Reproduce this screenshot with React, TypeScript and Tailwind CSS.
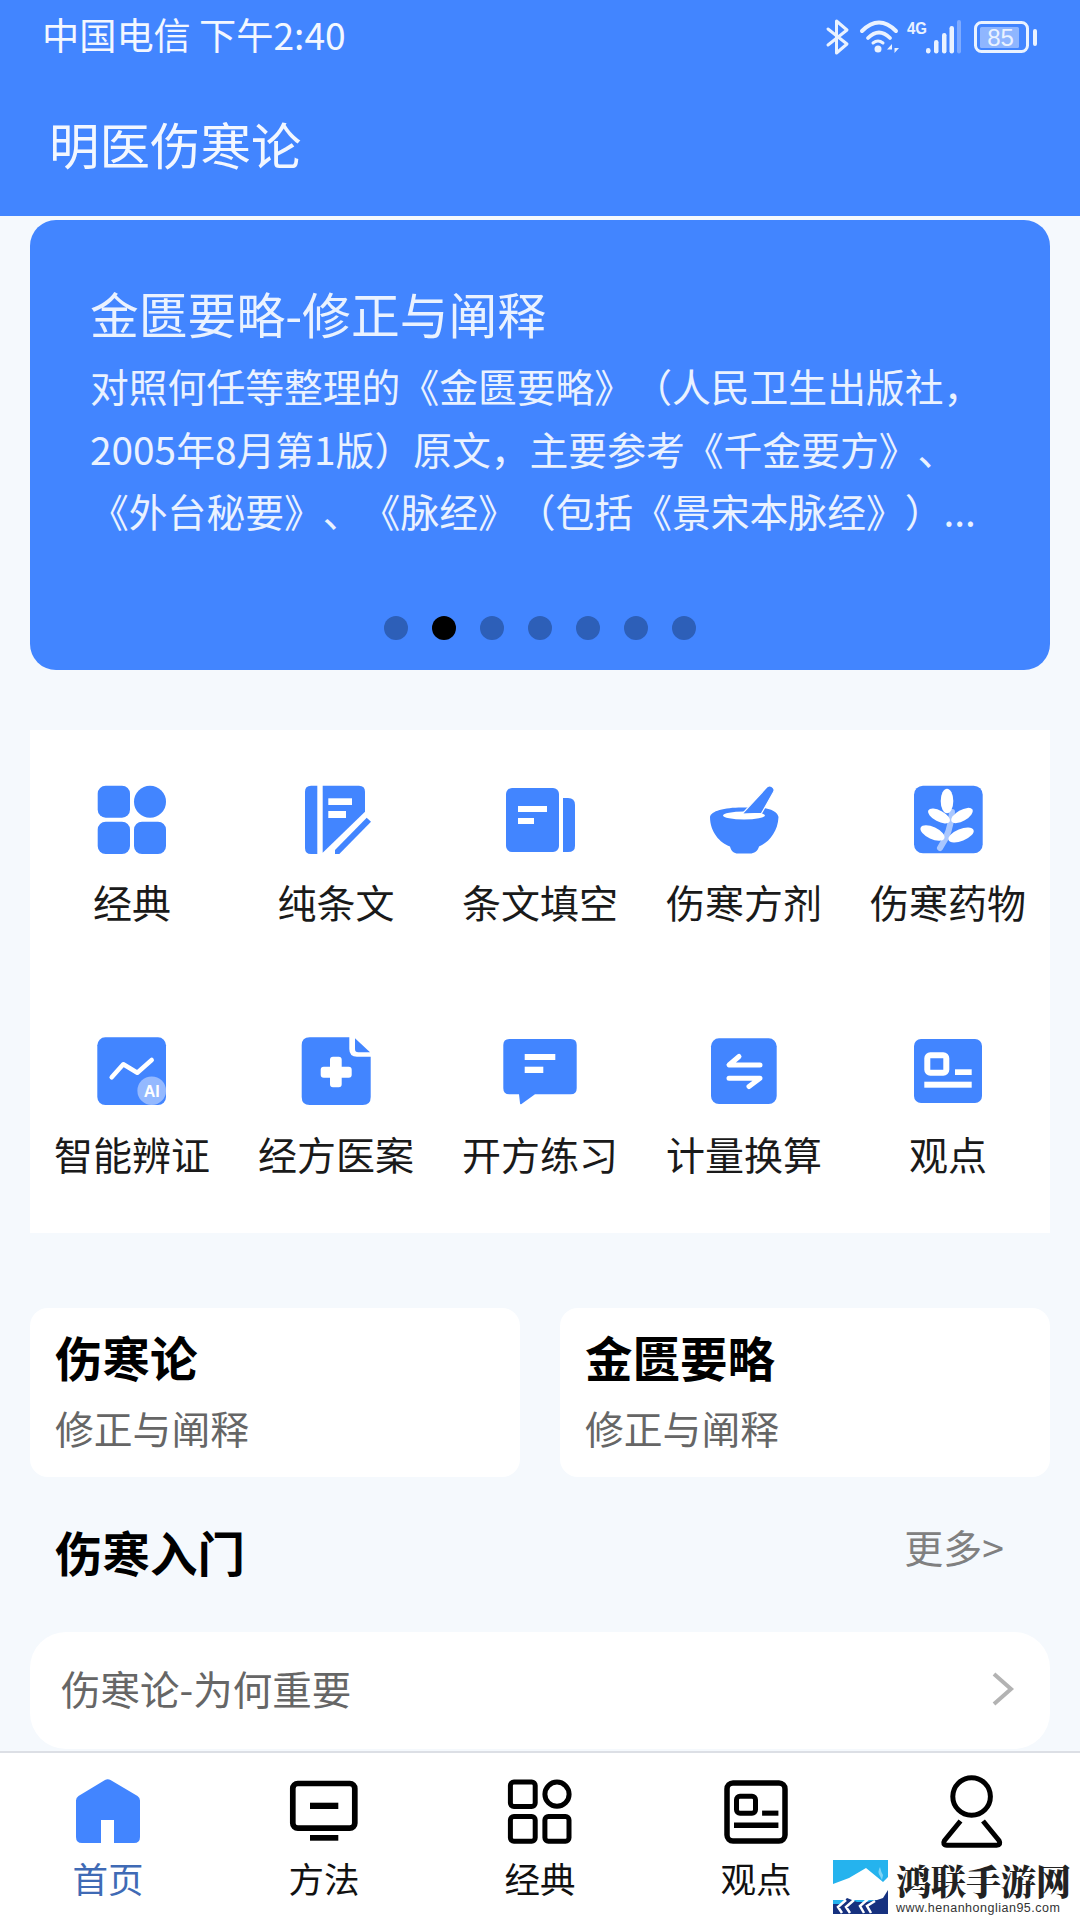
const B = "#4285ff";

function StatusIcons() {
  return (
    <svg width="220" height="44" viewBox="820 14 220 44" fill="none">
      <path d="M828 28 L847 43 L836.500 52 V20 L847 29 L828 44" stroke="#eaf2ff" strokeWidth="3" strokeLinejoin="round" strokeLinecap="round" />
      <path d="M862 30 Q879 13 896 30" stroke="#eaf2ff" strokeWidth="4" strokeLinecap="round" />
      <path d="M868 37 Q879 26 890 37" stroke="#eaf2ff" strokeWidth="3.800" strokeLinecap="round" />
      <path d="M873 42 Q878 38 883 42" stroke="#eaf2ff" strokeWidth="3" strokeLinecap="round" />
      <circle cx="878" cy="48" r="3.500" fill="#eaf2ff" />
      <path d="M892 43 L887 48.500 H892 Z M894.500 43 V52 L899 47 H894.500 Z" fill="#eaf2ff" />
      <text x="907" y="33" fontSize="16" fontWeight="700" fill="#eaf2ff" textLength="20" lengthAdjust="spacingAndGlyphs" fontFamily="'Liberation Sans',sans-serif">4G</text>
      <rect x="926" y="47" width="4.500" height="5.500" rx="2.200" fill="#eaf2ff" />
      <rect x="934" y="39" width="4.500" height="13.500" rx="2.200" fill="#eaf2ff" />
      <rect x="942" y="32" width="4.500" height="20.500" rx="2.200" fill="#eaf2ff" />
      <rect x="949.500" y="25" width="4.500" height="27.500" rx="2.200" fill="#eaf2ff" />
      <rect x="957" y="19" width="4" height="33.500" rx="2" fill="#7fabff" />
      <rect x="975.500" y="21.500" width="52" height="29" rx="6" stroke="#eaf2ff" strokeWidth="3" />
      <rect x="980" y="26" width="39" height="21" rx="1.500" fill="#8fb6ff" />
      <text x="1000.500" y="45" fontSize="24" textAnchor="middle" fill="#eaf2ff" fontFamily="'Liberation Sans',sans-serif">85</text>
      <rect x="1033" y="28" width="4" height="17" rx="2" fill="#eaf2ff" />
    </svg>
  );
}

function Jingdian() {
  return (
    <svg width="72" height="72" viewBox="0 0 72 72">
      <rect x="1.700" y="1.700" width="32.300" height="32" rx="8" fill={B} />
      <circle cx="54" cy="17.700" r="16" fill={B} />
      <rect x="1.700" y="37.700" width="32.300" height="32.300" rx="8" fill={B} />
      <rect x="38" y="37.700" width="32" height="32.300" rx="8" fill={B} />
    </svg>
  );
}
function Chuntiao() {
  return (
    <svg width="72" height="72" viewBox="0 0 72 72">
      <path d="M11 1.700 H17.300 V70 H11 Q5 70 5 64 V7.700 Q5 1.700 11 1.700 Z" fill={B} />
      <path d="M22.700 1.700 H59 Q65 1.700 65 7.700 V27.700 L22.700 68.700 Z" fill={B} />
      <rect x="28.300" y="14.300" width="23.700" height="6.700" fill="#fff" />
      <rect x="28.300" y="27" width="17.700" height="7" fill="#fff" />
      <path d="M66.700 33.700 L71 37.700 L39.300 70 H35 V66 Z" fill={B} />
    </svg>
  );
}
function Tiaowen() {
  return (
    <svg width="72" height="72" viewBox="0 0 72 72">
      <rect x="2" y="4" width="53" height="64" rx="6" fill={B} />
      <path d="M59 14 H64 Q71 14 71 21 V62 Q71 68 64 68 H59 Z" fill={B} />
      <rect x="14" y="22" width="29" height="6" fill="#fff" />
      <rect x="14" y="34" width="16" height="6" fill="#fff" />
    </svg>
  );
}
function Bowl() {
  return (
    <svg width="72" height="72" viewBox="0 0 72 72">
      <path d="M2 33 C3 27 16 23.500 34 23.500 L52 23.500 C62 24 70 28 70.500 33 C70 48 60 59 51 62.500 C50 67 46 69.500 42 69.500 H30 C26 69.500 23 67 22 62.500 C12 59 2 48 2 33 Z" fill={B} />
      <ellipse cx="36" cy="31.500" rx="21" ry="4" fill="#fff" />
      <path d="M59.300 2.700 Q62 0.800 65 3.500 Q67 5.500 65.500 8 L53.500 29.300 L34 30 Z" fill={B} stroke="#fff" strokeWidth="1.200" />
    </svg>
  );
}
function Herb() {
  return (
    <svg width="72" height="72" viewBox="0 0 72 72">
      <rect x="2" y="1.700" width="68.700" height="67.600" rx="9" fill={B} />
      <path d="M40 28 Q39 48 28 64" stroke="#a9c7ff" strokeWidth="6" fill="none" strokeLinecap="round" />
      <g fill="#fff">
        <ellipse cx="35" cy="17" rx="6.300" ry="12.200" />
        <ellipse cx="27" cy="32" rx="12" ry="5.500" transform="rotate(28 27 32)" />
        <ellipse cx="50" cy="31.500" rx="12" ry="5.500" transform="rotate(-30 50 31.500)" />
        <ellipse cx="20.500" cy="49" rx="13" ry="6" transform="rotate(25 20.500 49)" />
        <ellipse cx="49" cy="51" rx="13.500" ry="6" transform="rotate(-22 49 51)" />
      </g>
    </svg>
  );
}
function AiIcon() {
  return (
    <svg width="72" height="72" viewBox="0 0 72 72">
      <rect x="1.300" y="1.300" width="68.700" height="67.700" rx="8" fill={B} />
      <path d="M15.700 41.300 L27.300 28.300 L41.300 36.700 L55.700 24" stroke="#fff" strokeWidth="4.500" fill="none" strokeLinecap="round" strokeLinejoin="round" />
      <circle cx="55.700" cy="54.700" r="14.300" fill="#94b9ff" />
      <text x="55.700" y="60.500" fontSize="16" fontWeight="700" fill="#fff" textAnchor="middle" fontFamily="'Liberation Sans',sans-serif">AI</text>
    </svg>
  );
}
function Cross() {
  return (
    <svg width="72" height="72" viewBox="0 0 72 72">
      <path d="M9.700 1.300 H49.300 V13 Q49.300 20.700 57 20.700 H70.700 V61 Q70.700 69 62.700 69 H9.700 Q1.700 69 1.700 61 V9.300 Q1.700 1.300 9.700 1.300 Z" fill={B} />
      <path d="M55 2.300 L70 16.300 H58.300 Q55 16.300 55 13 Z" fill={B} />
      <path d="M33 20.700 H38.700 Q41.700 20.700 41.700 23.700 V30.700 H48.700 Q51.700 30.700 51.700 33.700 V38.700 Q51.700 41.700 48.700 41.700 H41.700 V48.300 Q41.700 51.300 38.700 51.300 H33 Q30 51.300 30 48.300 V41.700 H23.700 Q20.700 41.700 20.700 38.700 V33.700 Q20.700 30.700 23.700 30.700 H30 V23.700 Q30 20.700 33 20.700 Z" fill="#fff" />
    </svg>
  );
}
function Chat() {
  return (
    <svg width="76" height="72" viewBox="-2 0 76 72">
      <path d="M5.300 3 H66.700 Q72.700 3 72.700 9 V52.300 Q72.700 58.300 66.700 58.300 H31 L17.500 68 Q16 68.800 16 67 L15 58.300 H5.300 Q-0.700 58.300 -0.700 52.300 V9 Q-0.700 3 5.300 3 Z" fill={B} />
      <rect x="20.700" y="18" width="30.600" height="6" fill="#fff" />
      <rect x="20.700" y="30.700" width="18.600" height="6.300" fill="#fff" />
    </svg>
  );
}
function Swap() {
  return (
    <svg width="72" height="72" viewBox="0 0 72 72">
      <rect x="3" y="2.300" width="65.700" height="65.700" rx="8" fill={B} />
      <path d="M31 20.500 L21 29 H52" stroke="#fff" strokeWidth="5" fill="none" strokeLinecap="round" strokeLinejoin="round" />
      <path d="M21 42.300 H52 L41 50.500" stroke="#fff" strokeWidth="5" fill="none" strokeLinecap="round" strokeLinejoin="round" />
    </svg>
  );
}
function Opinion() {
  return (
    <svg width="72" height="72" viewBox="0 0 72 72">
      <rect x="2" y="3" width="68" height="64" rx="7" fill={B} />
      <rect x="15.300" y="19.300" width="19" height="17.500" rx="3" fill="none" stroke="#fff" strokeWidth="6" />
      <rect x="43" y="33.300" width="16.700" height="5.700" fill="#fff" />
      <rect x="12.300" y="45.700" width="47.400" height="6" fill="#fff" />
    </svg>
  );
}

const gridItems = [
  { label: "经典", icon: <Jingdian /> },
  { label: "纯条文", icon: <Chuntiao /> },
  { label: "条文填空", icon: <Tiaowen /> },
  { label: "伤寒方剂", icon: <Bowl /> },
  { label: "伤寒药物", icon: <Herb /> },
  { label: "智能辨证", icon: <AiIcon /> },
  { label: "经方医案", icon: <Cross /> },
  { label: "开方练习", icon: <Chat /> },
  { label: "计量换算", icon: <Swap /> },
  { label: "观点", icon: <Opinion /> },
];

function NavHome() {
  return (
    <svg width="72" height="72" viewBox="0 0 72 72">
      <path d="M33 4 Q35.700 2.300 38.500 4 L65.500 20 Q68 21.500 68 24.500 V61 Q68 67 62 67 H42 V44 H29 V67 H10 Q4 67 4 61 V24.500 Q4 21.500 6.500 20 Z" fill={B} />
    </svg>
  );
}
function NavMethod() {
  return (
    <svg width="72" height="72" viewBox="0 0 72 72">
      <rect x="4.800" y="7.500" width="62" height="44.700" rx="5" fill="none" stroke="#000" strokeWidth="5.700" />
      <rect x="22" y="26.700" width="28.300" height="6.300" fill="#000" />
      <rect x="22" y="59" width="28.300" height="5.700" fill="#000" />
    </svg>
  );
}
function NavClassic() {
  return (
    <svg width="72" height="72" viewBox="0 0 72 72" fill="none" stroke="#000" strokeWidth="5">
      <rect x="6.400" y="6" width="24.800" height="24.500" rx="3.500" />
      <circle cx="53" cy="18.200" r="12.100" />
      <rect x="6.400" y="40.500" width="24.800" height="24.800" rx="3.500" />
      <rect x="40.900" y="40.500" width="24.100" height="24.800" rx="3.500" />
    </svg>
  );
}
function NavOpinion() {
  return (
    <svg width="72" height="72" viewBox="0 0 72 72" fill="none">
      <rect x="7" y="7" width="58" height="58" rx="6" stroke="#000" strokeWidth="5.500" />
      <rect x="16.500" y="20.200" width="19" height="17" rx="3.500" stroke="#000" strokeWidth="5" />
      <rect x="42.100" y="34.600" width="16.300" height="5.100" fill="#000" />
      <rect x="14" y="46.500" width="44.400" height="5.500" fill="#000" />
    </svg>
  );
}
function NavMe() {
  return (
    <svg width="72" height="72" viewBox="0 0 72 72" fill="none" stroke="#000" strokeWidth="5" strokeLinejoin="round" className="overflow-visible">
      <circle cx="35.600" cy="20.500" r="18.800" />
      <path d="M24.500 45 L8.500 64.500 Q6 69 11 69.300 H60.500 Q65.500 69 63 64.500 L47 45" />
    </svg>
  );
}

const navItems = [
  { label: "首页", icon: <NavHome />, active: true },
  { label: "方法", icon: <NavMethod /> },
  { label: "经典", icon: <NavClassic /> },
  { label: "观点", icon: <NavOpinion /> },
  { label: "", icon: <NavMe /> },
];

function Logo() {
  return (
    <svg width="55" height="54" viewBox="0 0 55 54">
      <rect width="55" height="54" fill="#25b3ee" />
      <path d="M0 24 L16 18 L33 8 L44 17 L50 22 L55 17 V40 H0 Z" fill="#fff" />
      <path d="M47 16 Q44 12 47 7 Q48 12 50 15 L49 20 Z" fill="#7fd4f5" />
      <path d="M0 44 H8 L14 38 L24 42 L34 42 L44 40 L50 38 L55 30 V54 H0 Z" fill="#16317f" />
      <path d="M13 40 L5 47 L9 53 M21 40 L13 47 L17 53 M35 39 L27 46 L31 53 M42 41 L34 46 L38 53" stroke="#fff" strokeWidth="2.500" fill="none" />
    </svg>
  );
}

export default function App() {
  return (
    <div className="relative flex h-[1920px] w-[1080px] flex-col overflow-hidden bg-[#f5f9fd] font-['Noto_Sans_CJK_SC','Noto_Sans',sans-serif] [text-spacing-trim:space-all]">
      <header className="flex h-[216px] shrink-0 flex-col bg-[#4285ff] text-[#f3f7ff]">
        <div className="flex h-[74px] items-center justify-between pl-[42px] pr-[40px]">
          <span className="mb-[4px] text-[37.200px] leading-none">中国电信 下午2:40</span>
          <StatusIcons />
        </div>
        <div className="pl-[49px] pt-[32px] text-[50.500px] leading-[74px]">明医伤寒论</div>
      </header>

      <main className="flex flex-1 flex-col px-[30px] pt-[4px]">
        <section className="flex h-[450px] shrink-0 flex-col rounded-[26px] bg-[#4285ff] px-[60px] pt-[61px] text-[#eaf2ff]">
          <div className="text-[48.800px] leading-[64px]">金匮要略-修正与阐释</div>
          <p className="mt-[9px] whitespace-nowrap text-[38.800px] leading-[62.500px]">
            对照何任等整理的《金匮要略》（人民卫生出版社，<br />
            2005年8月第1版）原文，主要参考《千金要方》、<br />
            《外台秘要》、《脉经》（包括《景宋本脉经》）...
          </p>
          <div className="mt-[74px] flex justify-center gap-[24px]">
            {[0, 1, 2, 3, 4, 5, 6].map((i) => (
              <span key={i} className={i === 1 ? "h-[24px] w-[24px] rounded-full bg-black" : "h-[24px] w-[24px] rounded-full bg-[#2d5fb8]"} />
            ))}
          </div>
        </section>

        <section className="mt-[60px] grid h-[503px] shrink-0 grid-cols-5 grid-rows-[252px_251px] bg-white">
          {gridItems.map((item) => (
            <div key={item.label} className="flex flex-col items-center pt-[54px]">
              <div className="flex h-[72px] items-center justify-center">{item.icon}</div>
              <div className="mt-[17px] whitespace-nowrap text-[39px] leading-[56px] text-[#1a1a1a]">{item.label}</div>
            </div>
          ))}
        </section>

        <section className="mt-[75px] grid shrink-0 grid-cols-2 gap-[40px]">
          {["伤寒论", "金匮要略"].map((t) => (
            <div key={t} className="h-[169px] rounded-[18px] bg-white pl-[25px] pt-[16px]">
              <div className="text-[47.500px] font-bold leading-[66px] text-black">{t}</div>
              <div className="mt-[9px] text-[38.800px] leading-[56px] text-[#666666]">修正与阐释</div>
            </div>
          ))}
        </section>

        <div className="mt-[42px] flex h-[66px] shrink-0 items-center justify-between pl-[25px] pr-[46px]">
          <span className="text-[47.500px] font-bold leading-[66px] text-black">伤寒入门</span>
          <span className="mb-[12px] text-[39px] leading-[50px] text-[#808080]">更多&gt;</span>
        </div>

        <div className="mt-[47px] flex h-[117px] shrink-0 items-center justify-between rounded-[36px] bg-white pb-[3px] pl-[31px] pr-[35px]">
          <span className="mb-[3px] text-[39.500px] leading-[56px] text-[#666666]">伤寒论-为何重要</span>
          <svg width="24" height="36" viewBox="0 0 24 36" fill="none">
            <path d="M3 3 L20 18 L3 33" stroke="#b3b3b3" strokeWidth="4" />
          </svg>
        </div>
      </main>

      <nav className="grid h-[169px] shrink-0 grid-cols-5 border-t-2 border-[#dcdfe5] bg-white">
        {navItems.map((item, i) => (
          <div key={i} className="flex flex-col items-center pt-[23px]">
            <div className="flex h-[72px] items-center justify-center">{item.icon}</div>
            <div className={item.active ? "mt-[5px] text-[35.500px] leading-[50px] text-[#3f6ab5]" : "mt-[5px] text-[35.500px] leading-[50px] text-[#111111]"}>{item.label}</div>
          </div>
        ))}
      </nav>

      <div className="absolute left-[833px] top-[1860px] flex items-start gap-[8px]">
        <Logo />
        <div className="flex flex-col">
          <span className="font-['Noto_Serif_CJK_SC','Noto_Sans_CJK_SC',serif] text-[35px] font-black leading-[40px] text-[#222222]">鸿联手游网</span>
          <span className="font-['Liberation_Sans',sans-serif] text-[12.500px] leading-[16px] tracking-[0.5px] text-[#333333]">www.henanhonglian95.com</span>
        </div>
      </div>
    </div>
  );
}
